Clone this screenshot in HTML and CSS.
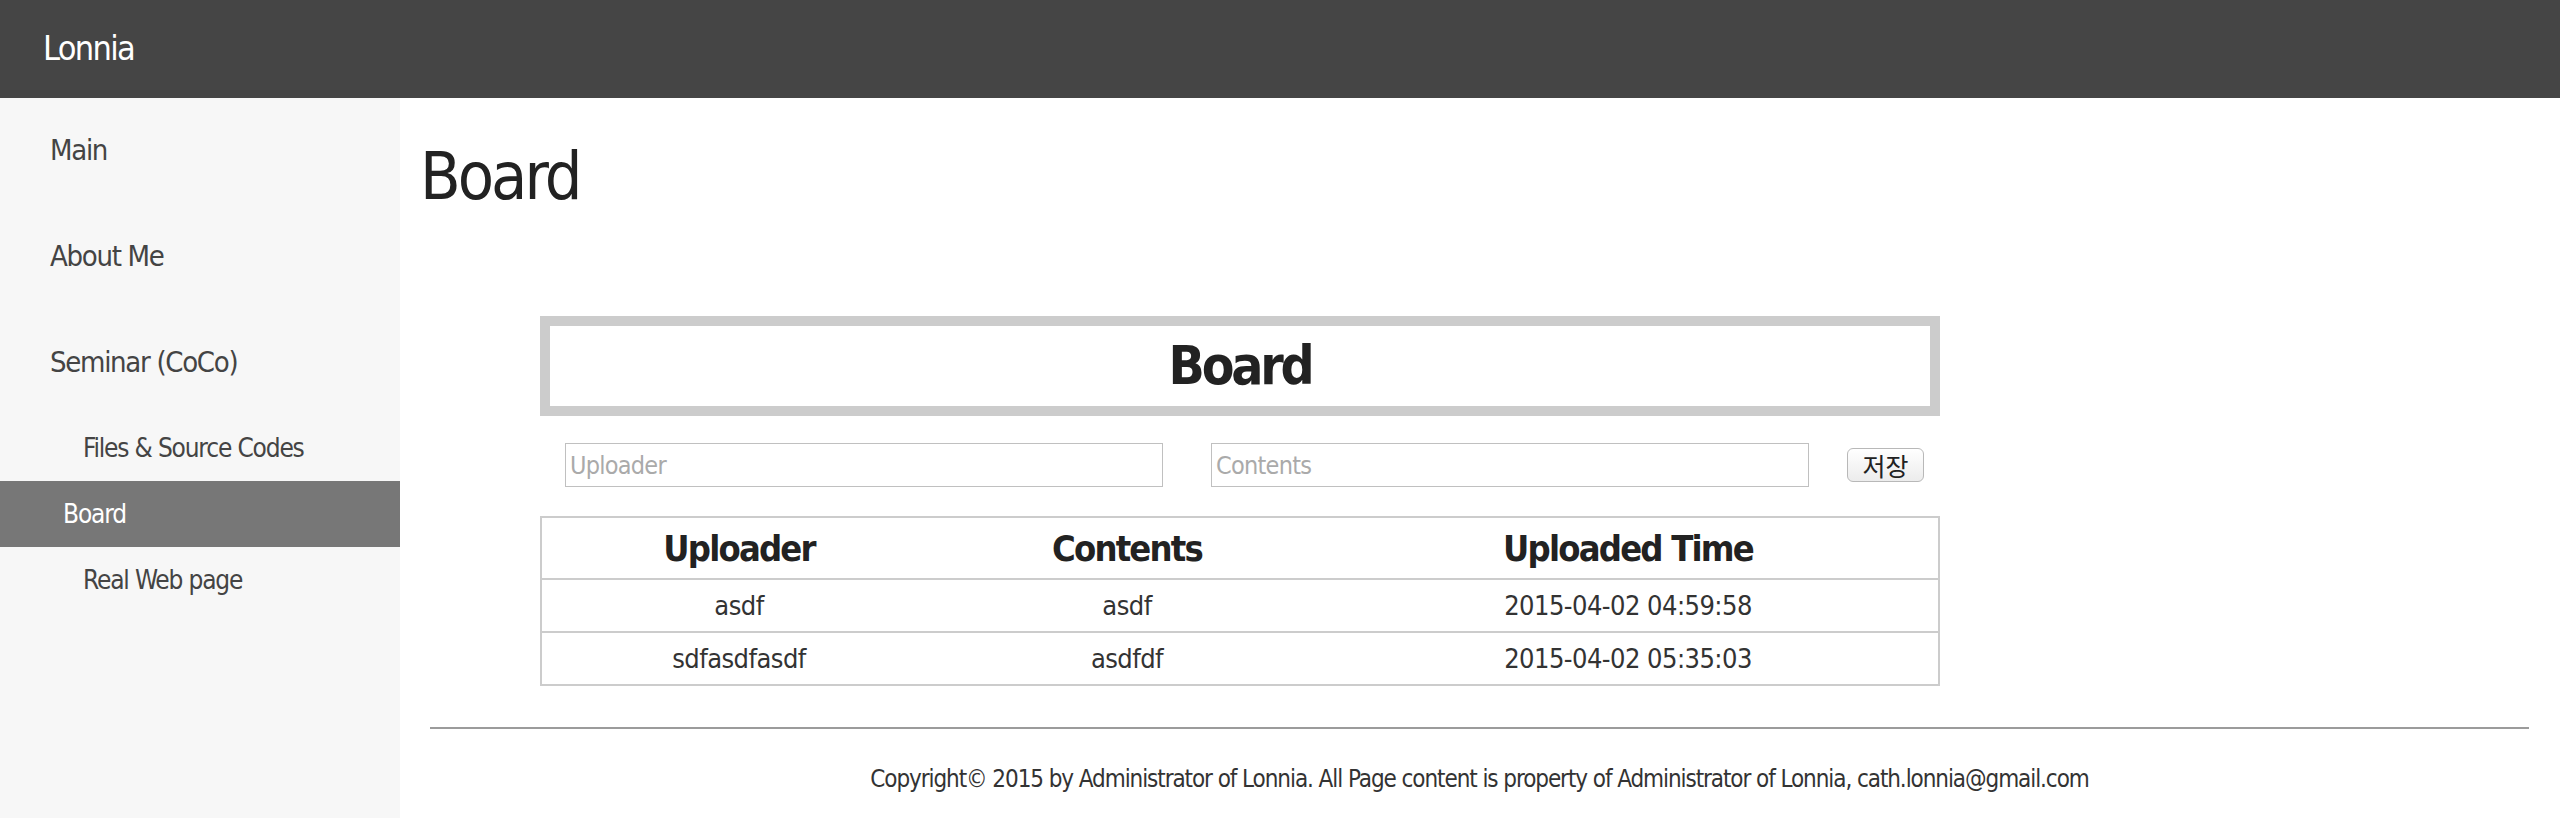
FILE: index.html
```html
<!DOCTYPE html>
<html lang="ko">
<head>
<meta charset="utf-8">
<title>Lonnia - Board</title>
<link rel="stylesheet" href="styles.css">
</head>
<body>
<header class="topbar"><span class="brand">Lonnia</span></header>
<div class="layout">
  <nav class="sidebar">
    <a class="nav-item">Main</a>
    <a class="nav-item">About Me</a>
    <a class="nav-item">Seminar (CoCo)</a>
    <a class="nav-sub">Files &amp; Source Codes</a>
    <a class="nav-sub active">Board</a>
    <a class="nav-sub">Real Web page</a>
  </nav>
  <main class="content">
    <h1 class="page-title">Board</h1>
    <section class="board">
      <div class="board-head">Board</div>
      <form class="entry">
        <input class="field" type="text" placeholder="Uploader">
        <input class="field" type="text" placeholder="Contents">
        <button class="save" type="button">저장</button>
      </form>
      <table class="posts">
        <thead>
          <tr><th class="c1">Uploader</th><th class="c2">Contents</th><th class="c3">Uploaded Time</th></tr>
        </thead>
        <tbody>
          <tr><td>asdf</td><td>asdf</td><td>2015-04-02 04:59:58</td></tr>
          <tr><td>sdfasdfasdf</td><td>asdfdf</td><td>2015-04-02 05:35:03</td></tr>
        </tbody>
      </table>
    </section>
    <hr class="rule">
    <footer class="footer">Copyright© 2015 by Administrator of Lonnia. All Page content is property of Administrator of Lonnia, cath.lonnia@gmail.com</footer>
  </main>
</div>
</body>
</html>
```
FILE: styles.css
```css
html, body {
  margin: 0;
  padding: 0;
  background: #ffffff;
}
body {
  font-family: "DejaVu Sans Condensed", "DejaVu Sans", sans-serif;
  color: #333;
  height: 818px;
  overflow: hidden;
}
.topbar {
  height: 98px;
  background: #454545;
  display: flex;
  align-items: center;
  padding-left: 43px;
  box-sizing: border-box;
}
.brand {
  color: #fff;
  font-size: 34px;
  letter-spacing: -0.05em;
  line-height: 44px;
  margin-top: -2px;
}
.layout {
  display: flex;
  height: 720px;
}
.sidebar {
  width: 400px;
  flex: none;
  background: #f7f7f7;
  display: flex;
  flex-direction: column;
}
.nav-item {
  display: block;
  height: 106px;
  line-height: 106px;
  padding-left: 50px;
  font-size: 29px;
  letter-spacing: -0.045em;
  color: #444;
}
.nav-item:first-child { height: 105px; line-height: 105px; }
.nav-sub {
  display: block;
  height: 66px;
  line-height: 66px;
  padding-left: 83px;
  font-size: 26px;
  letter-spacing: -0.045em;
  color: #444;
}
.nav-sub.active {
  background: #777;
  color: #fff;
  padding-left: 63px;
}
.content {
  flex: 1;
  min-width: 0;
  display: flex;
  flex-direction: column;
}
.page-title {
  margin: 36px 0 0 20px;
  font-size: 66px;
  letter-spacing: -0.045em;
  line-height: 86px;
  font-weight: normal;
  color: #222;
}
.board {
  width: 1400px;
  margin: 96px 0 0 140px;
}
.board-head {
  border: 10px solid #ccc;
  height: 80px;
  line-height: 80px;
  text-align: center;
  font-size: 53px;
  letter-spacing: -0.06em;
  font-weight: bold;
  color: #222;
}
.entry {
  display: flex;
  align-items: center;
  margin: 27px 0 0 25px;
  height: 44px;
}
.field {
  width: 598px;
  height: 44px;
  box-sizing: border-box;
  border: 1px solid #c0c0c0;
  padding: 0 4px;
  font-family: inherit;
  font-size: 25px;
  letter-spacing: -0.03em;
  color: #333;
  background: #fff;
  outline: none;
}
.field + .field { margin-left: 48px; }
.field::placeholder { color: #aaa; }
.save {
  margin-left: 38px;
  width: 77px;
  height: 34px;
  box-sizing: border-box;
  border: 1px solid #b8b8b8;
  border-radius: 6px;
  background: linear-gradient(#ffffff, #ececec);
  font-family: "Noto Sans CJK KR", sans-serif;
  font-size: 25px;
  line-height: 30px;
  color: #222;
  padding: 0;
}
.posts {
  margin-top: 29px;
  width: 1400px;
  border-collapse: collapse;
  table-layout: fixed;
  border: 2px solid #ccc;
}
.posts th, .posts td {
  border-top: 2px solid #ccc;
  text-align: center;
  padding: 0;
}
.posts th {
  height: 60px;
  font-size: 36px;
  letter-spacing: -0.05em;
  font-weight: bold;
  color: #222;
}
.posts td {
  height: 51px;
  font-size: 27px;
  letter-spacing: -0.02em;
  color: #333;
}
.c1 { width: 394px; }
.c2 { width: 382px; }
.c3 { width: auto; }
.rule {
  margin: 41px 31px 0 30px;
  border: 0;
  height: 2px;
  background: #9b9b9b;
}
.footer {
  margin: 35px 31px 0 30px;
  text-align: center;
  font-size: 24px;
  letter-spacing: -0.045em;
  line-height: 30px;
  color: #333;
}
```
